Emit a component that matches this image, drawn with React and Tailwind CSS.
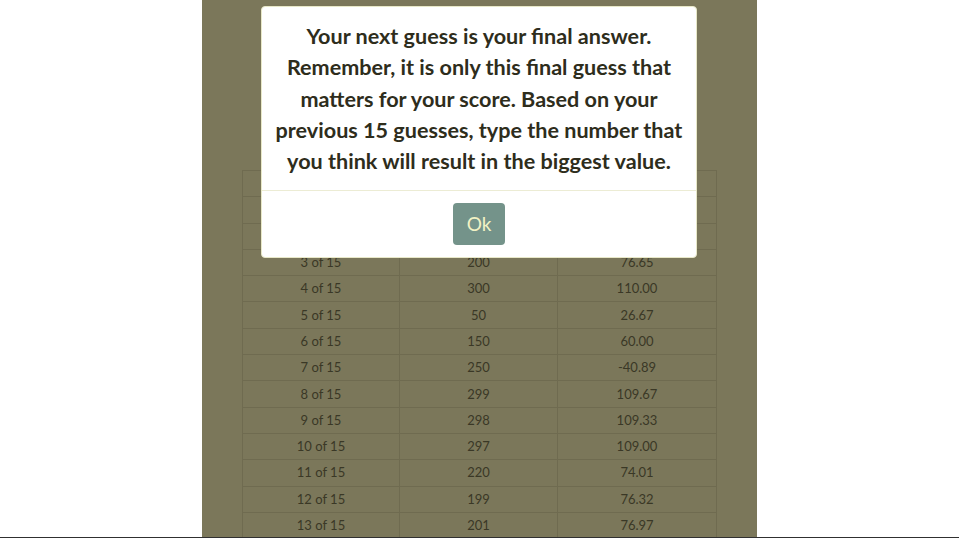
import React from "react";

const rows = [
  ["Guess", "Number", "Value"],
  ["1 of 15", "100", "43.33"],
  ["2 of 15", "180", "69.34"],
  ["3 of 15", "200", "76.65"],
  ["4 of 15", "300", "110.00"],
  ["5 of 15", "50", "26.67"],
  ["6 of 15", "150", "60.00"],
  ["7 of 15", "250", "-40.89"],
  ["8 of 15", "299", "109.67"],
  ["9 of 15", "298", "109.33"],
  ["10 of 15", "297", "109.00"],
  ["11 of 15", "220", "74.01"],
  ["12 of 15", "199", "76.32"],
  ["13 of 15", "201", "76.97"],
];

const lines = [
  "Your next guess is your final answer.",
  "Remember, it is only this final guess that",
  "matters for your score. Based on your",
  "previous 15 guesses, type the number that",
  "you think will result in the biggest value.",
];

export default function App() {
  return (
    <div
      className="relative h-[538px] w-full overflow-hidden bg-white border-b border-[#303030]"
      style={{ fontFamily: 'Lato, "Noto Sans", sans-serif' }}
    >
      <div className="ml-[202px] w-[555px] h-full bg-[#7b775a] pt-[170px] pl-[40px]">
        <table className="w-[474px] table-fixed border-collapse text-[13px] text-[#3a3826]">
          <colgroup>
            <col className="w-[157px]" />
            <col className="w-[158px]" />
            <col className="w-[159px]" />
          </colgroup>
          <tbody>
            {rows.map((r, i) => (
              <tr key={i} className="h-[26.3px]">
                {r.map((c, j) => (
                  <td
                    key={j}
                    className="border border-[#6f6b50] text-center align-middle p-0 leading-none"
                  >
                    {c}
                  </td>
                ))}
              </tr>
            ))}
          </tbody>
        </table>
      </div>

      <div className="absolute left-[261px] top-[6px] w-[436px] h-[252px] bg-white rounded-[4px] border border-[#e8e8c8] flex flex-col">
        <div className="h-[183px] pt-[14px] px-[4px] text-center text-[21.6px] leading-[31.3px] font-bold text-[#2e2d1c] whitespace-nowrap">
          {lines.map((l, i) => (
            <div key={i}>{l}</div>
          ))}
        </div>
        <div className="border-t border-[#ececd4] flex-1 flex items-center justify-center">
          <button className="w-[52px] h-[42px] rounded-[4px] bg-[#74938a] text-[#f2f2c4] text-[19px]">
            Ok
          </button>
        </div>
      </div>
    </div>
  );
}
